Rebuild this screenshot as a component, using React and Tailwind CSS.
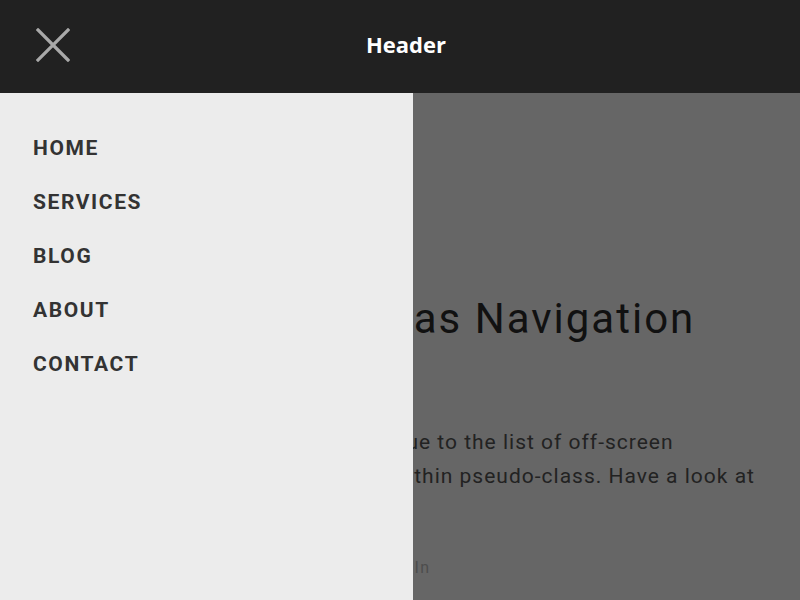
import React from "react";

const links = ["Home", "Services", "Blog", "About", "Contact"];

function CloseIcon() {
  return (
    <svg width="34" height="34" viewBox="0 0 34 34" className="block">
      <path d="M2 2 L32 32 M32 2 L2 32" stroke="#a9a9a9" strokeWidth="3.2" strokeLinecap="square" />
    </svg>
  );
}

export default function App() {
  return (
    <div className="h-screen w-full flex flex-col overflow-hidden font-['Roboto',sans-serif]">
      <header className="h-[93px] shrink-0 bg-[#212121] relative flex items-center justify-center pb-[4px]">
        <button className="absolute left-[36px] top-[28px]">
          <CloseIcon />
        </button>
        <h1 className="ml-[12px] text-white text-[22px] font-bold font-['Open_Sans',sans-serif]">
          Header
        </h1>
      </header>

      <div className="relative flex-1 bg-[#666666]">
        <main className="pl-[240px] pt-[202px]">
          <h2 className="text-[42px] leading-[48px] text-[#111111] tracking-[2px] whitespace-nowrap">
            Off-canvas Navigation
          </h2>
          <p className="mt-[82px] text-[21px] leading-[34px] text-[#222222] tracking-[1px] whitespace-nowrap">
            Added a technique to the list of off-screen
            <br />
            using a :focus-within pseudo-class. Have a look at
            <br />
            the others.
          </p>
          <p className="mt-[29px] text-[16px] leading-[24px] text-[#4d4d4d] tracking-[1.5px]">
            Follow me on LinkedIn
          </p>
        </main>

        <nav className="absolute inset-y-0 left-0 w-[413px] bg-[#ececec] pt-[29px]">
          <ul className="flex flex-col">
            {links.map((l) => (
              <li key={l} className="h-[54px] flex items-center pl-[33px]">
                <a className="uppercase font-bold text-[21px] tracking-[1.6px] text-[#333333]">
                  {l}
                </a>
              </li>
            ))}
          </ul>
        </nav>
      </div>
    </div>
  );
}
